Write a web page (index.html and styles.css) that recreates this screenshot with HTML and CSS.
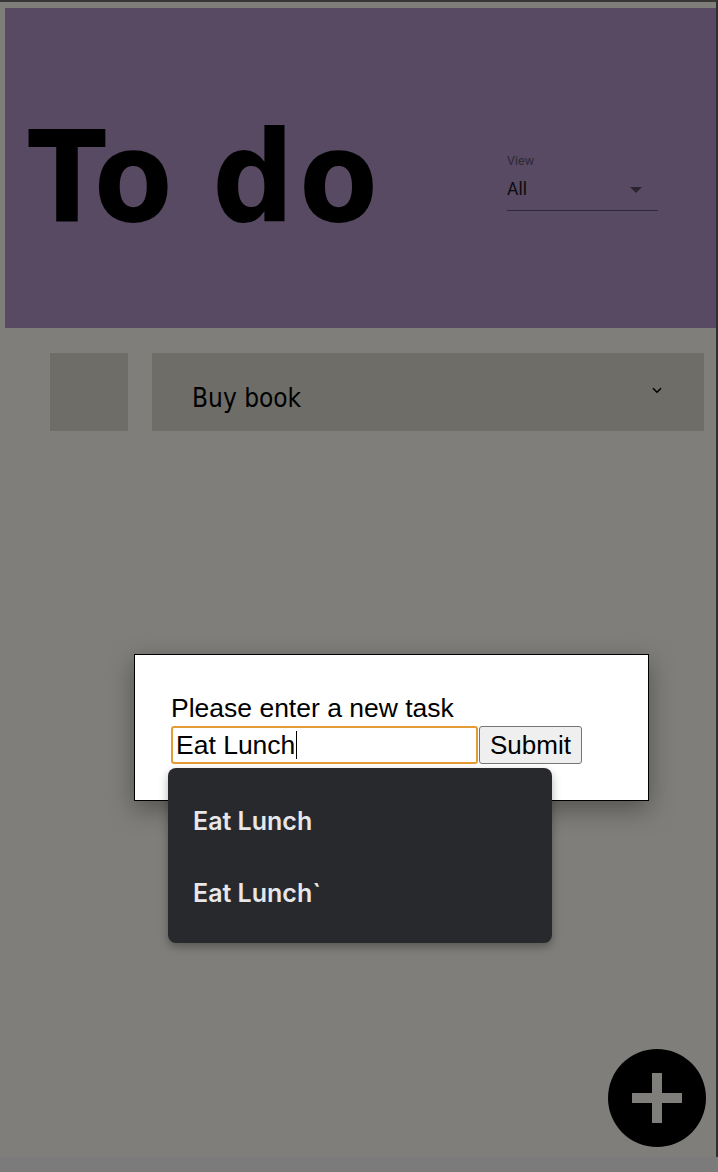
FILE: index.html
```html
<!DOCTYPE html>
<html lang="en">
<head>
<meta charset="utf-8">
<title>To do</title>
<link rel="stylesheet" href="styles.css">
</head>
<body>
<div class="window">
  <div class="app">
    <header class="header">
      <h1 class="title">To do</h1>
      <div class="select">
        <span class="select-label">View</span>
        <div class="select-value">
          <span>All</span>
          <svg class="select-arrow" width="12" height="6" viewBox="0 0 12 6"><path d="M0 0h12L6 6z" fill="#2a2431"/></svg>
        </div>
      </div>
    </header>
    <main class="list">
      <div class="task">
        <div class="task-check"></div>
        <div class="task-body">
          <span class="task-name">Buy book</span>
          <svg class="task-chevron" width="10" height="7" viewBox="0 0 10 7"><path d="M1 1.2l4 4 4-4" fill="none" stroke="#000" stroke-width="1.6"/></svg>
        </div>
      </div>
    </main>
    <button class="fab" aria-label="Add task">
      <svg width="50" height="50" viewBox="0 0 50 50"><path d="M20 0h10v20h20v10H30v20H20V30H0V20h20z" fill="#7f7e7a"/></svg>
    </button>
  </div>
</div>

<div class="dialog">
  <label class="dialog-label">Please enter a new task</label>
  <div class="dialog-row">
    <div class="field"><span>Eat Lunch</span><span class="caret"></span></div>
    <button class="submit">Submit</button>
  </div>
</div>

<ul class="suggest">
  <li>Eat Lunch</li>
  <li>Eat Lunch`</li>
</ul>
</body>
</html>
```

FILE: styles.css
```css
* { box-sizing: border-box; }

html, body {
  margin: 0;
  padding: 0;
  background: #7b7b7b;
  width: 718px;
  height: 1172px;
  overflow: hidden;
}

.window {
  height: 1157px;
  border-top: 2px solid #363636;
  border-right: 2px solid #2f2f2f;
  background: #7f7e7a;
  padding: 6px 0 0 5px;
}

.app {
  position: relative;
  height: 100%;
}

.header {
  height: 320px;
  background: #574a62;
  display: flex;
  align-items: center;
  padding-left: 23px;
}

.title {
  margin: 0;
  font-family: "DejaVu Sans", sans-serif;
  font-stretch: condensed;
  font-weight: 700;
  font-size: 127px;
  line-height: 1;
  letter-spacing: 5px;
  word-spacing: -10px;
  color: #000;
  width: 479px;
  padding-top: 18px;
}

.select {
  display: flex;
  flex-direction: column;
  width: 151px;
  font-family: Roboto, sans-serif;
  margin-top: 30px;
}

.select-label {
  font-size: 12.5px;
  color: #2e2837;
  line-height: 1;
}

.select-value {
  display: flex;
  align-items: center;
  justify-content: space-between;
  font-size: 17.5px;
  color: #0c0a0e;
  padding: 12px 16px 11px 0;
  border-bottom: 1px solid #2e2837;
}

.select-arrow { margin-top: 2px; }

.list {
  padding: 25px 12px 0 45px;
}

.task {
  display: flex;
  gap: 24px;
}

.task-check {
  width: 78px;
  height: 78px;
  background: #6e6d68;
}

.task-body {
  flex: 1;
  height: 78px;
  background: #6e6d68;
  display: flex;
  align-items: center;
  justify-content: space-between;
  padding: 0 42px 0 40px;
}

.task-name {
  font-family: "DejaVu Sans", sans-serif;
  font-stretch: condensed;
  font-size: 26px;
  color: #000;
  padding-top: 12px;
}

.task-chevron { margin-top: -4px; }

.fab {
  position: absolute;
  right: 10px;
  bottom: 10px;
  width: 98px;
  height: 98px;
  border-radius: 50%;
  border: none;
  background: #000;
  display: flex;
  align-items: center;
  justify-content: center;
  padding: 0;
}

.dialog {
  position: absolute;
  left: 134px;
  top: 654px;
  width: 515px;
  height: 147px;
  background: #fff;
  border: 1.5px solid #000;
  padding: 38px 0 0 36px;
  font-family: "Liberation Sans", Arial, sans-serif;
  font-size: 26.5px;
  color: #000;
  box-shadow: 0 8px 24px rgba(0, 0, 0, 0.35);
}

.dialog-label {
  display: block;
  line-height: 30px;
}

.dialog-row {
  display: flex;
  margin-top: 3px;
}

.field {
  width: 307px;
  height: 38px;
  border: 2px solid #e59c36;
  border-radius: 3px;
  padding: 0 0 0 3px;
  display: flex;
  align-items: center;
  line-height: 1;
}

.caret {
  width: 1px;
  height: 28px;
  background: #000;
  margin-left: 1px;
}

.submit {
  width: 103px;
  height: 38px;
  margin-left: 1px;
  background: #efefef;
  border: 1px solid #767676;
  border-radius: 3px;
  font-family: "Liberation Sans", Arial, sans-serif;
  font-size: 26px;
  color: #000;
  padding: 0;
}

.suggest {
  position: absolute;
  left: 168px;
  top: 768px;
  width: 384px;
  height: 175px;
  margin: 0;
  padding: 17px 0 0 0;
  list-style: none;
  background: #28292d;
  border-radius: 8px;
  box-shadow: 0 4px 10px rgba(0, 0, 0, 0.3);
  font-family: Inter, sans-serif;
  font-weight: 600;
  font-size: 25px;
  color: #e7e7ea;
}

.suggest li {
  height: 72px;
  display: flex;
  align-items: center;
  padding-left: 25px;
}
```
